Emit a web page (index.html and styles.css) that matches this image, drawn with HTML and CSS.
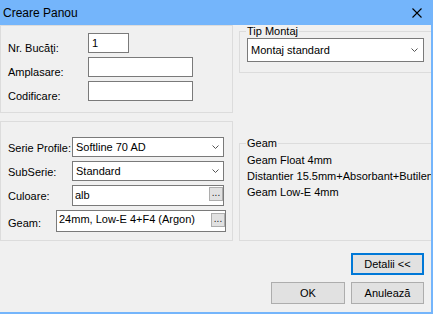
FILE: index.html
```html
<!DOCTYPE html>
<html lang="ro">
<head>
    <meta charset="UTF-8">
    <title>Creare Panou</title>
    <link rel="stylesheet" href="styles.css">
</head>
<body>
    <div class="window">
        <div class="titlebar">
            <span class="title">Creare Panou</span>
            <svg class="close" width="10" height="10" viewBox="0 0 10 10">
                <path d="M0.5 0.5 L9.5 9.5 M9.5 0.5 L0.5 9.5" stroke="#000" stroke-width="1.1" fill="none"/>
            </svg>
        </div>

        <div class="content">
            <div class="panel panel-top">
                <div class="row">
                    <span class="label label-top">Nr. Bucăţi:</span>
                    <div class="field field-small">1</div>
                </div>
                <div class="row">
                    <span class="label label-top">Amplasare:</span>
                    <div class="field field-wide"></div>
                </div>
                <div class="row">
                    <span class="label label-top">Codificare:</span>
                    <div class="field field-wide"></div>
                </div>
            </div>

            <fieldset class="group group-montaj">
                <legend>Tip Montaj</legend>
                <div class="combo combo-montaj">
                    <span>Montaj standard</span>
                    <svg width="7" height="4" viewBox="0 0 7 4"><path d="M0.5 0.5 L3.5 3.5 L6.5 0.5" stroke="#555" fill="none"/></svg>
                </div>
            </fieldset>

            <div class="panel panel-profile">
                <div class="row">
                    <span class="label label-profile">Serie Profile:</span>
                    <div class="combo">
                        <span>Softline 70 AD</span>
                        <svg width="7" height="4" viewBox="0 0 7 4"><path d="M0.5 0.5 L3.5 3.5 L6.5 0.5" stroke="#555" fill="none"/></svg>
                    </div>
                </div>
                <div class="row">
                    <span class="label label-profile">SubSerie:</span>
                    <div class="combo">
                        <span>Standard</span>
                        <svg width="7" height="4" viewBox="0 0 7 4"><path d="M0.5 0.5 L3.5 3.5 L6.5 0.5" stroke="#555" fill="none"/></svg>
                    </div>
                </div>
                <div class="row row-culoare">
                    <span class="label label-profile">Culoare:</span>
                    <div class="field field-pick">
                        <span>alb</span>
                        <span class="dots">...</span>
                    </div>
                </div>
                <div class="row row-geam">
                    <span class="label label-geam">Geam:</span>
                    <div class="field field-pick field-geam">
                        <span>24mm, Low-E 4+F4 (Argon)</span>
                        <span class="dots">...</span>
                    </div>
                </div>
            </div>

            <fieldset class="group group-geam">
                <legend>Geam</legend>
                <div class="geam-list">
                    <div>Geam Float 4mm</div>
                    <div>Distantier 15.5mm+Absorbant+Butilen</div>
                    <div>Geam Low-E 4mm</div>
                </div>
            </fieldset>
        </div>

        <div class="actions">
            <button class="btn btn-default">Detalii &lt;&lt;</button>
            <div class="actions-row">
                <button class="btn btn-ok">OK</button>
                <button class="btn">Anulează</button>
            </div>
        </div>
    </div>
</body>
</html>
```

FILE: styles.css
```css
/* Fereastra de dialog, stil Windows */
body {
    margin: 0;
    font-family: "Liberation Sans", Arial, sans-serif;
    font-size: 11px;
    color: #000;
    background: #f0f0f0;
}
.window {
    width: 433px;
    height: 314px;
    box-sizing: border-box;
    display: flex;
    flex-direction: column;
    background: #f0f0f0;
    border-right: 2px solid #74b5fb;
    border-bottom: 2px solid #74b5fb;
    overflow: hidden;
}
.titlebar {
    height: 25px;
    flex: none;
    display: flex;
    align-items: center;
    justify-content: space-between;
    padding: 0 9px 0 3px;
    background: #74b5fb;
}
.title {
    font-size: 12px;
    line-height: 14px;
    padding-top: 1px;
}
.close {
    display: block;
}

/* Zona principala */
.content {
    display: grid;
    grid-template-columns: 233px 1fr;
    grid-template-rows: 88px 120px;
    column-gap: 6px;
    row-gap: 8px;
}
.panel {
    border: 1px solid #dcdcdc;
    box-sizing: border-box;
    display: flex;
    flex-direction: column;
    gap: 4px;
    padding-left: 7px;
}
.panel-top { padding-top: 7px; }
.panel-profile { padding-top: 15px; }
.row {
    display: flex;
    height: 20px;
}
.row-culoare { height: 21px; }
.row-geam { height: 22px; }
.label {
    line-height: 13px;
    white-space: nowrap;
}
.label-top { width: 80px; margin-top: 9px; }
.label-profile { width: 64px; margin-top: 5px; }
.label-geam { width: 48px; margin-top: 7px; }

.field {
    box-sizing: border-box;
    height: 100%;
    border: 1px solid #7a7a7a;
    background: #fff;
    padding: 3px 0 0 3px;
    line-height: 13px;
}
.field-small { width: 41px; }
.field-wide { width: 105px; }
.field-pick {
    width: 152px;
    display: flex;
    justify-content: space-between;
    align-items: flex-start;
    padding: 0 0 0 2px;
}
.field-pick > span:first-child { padding-top: 3px; }
.field-geam { width: 170px; }
.field-geam > span:first-child { padding-top: 2px; }
.field-geam .dots { margin-top: 2px; }
.dots {
    box-sizing: border-box;
    width: 14px;
    height: 14px;
    margin-top: 1px;
    border: 1px solid #adadad;
    background: #e1e1e1;
    font-size: 10px;
    line-height: 10px;
    text-align: center;
    color: #222;
}

.combo {
    box-sizing: border-box;
    width: 152px;
    height: 100%;
    border: 1px solid #7a7a7a;
    background: #fff;
    display: flex;
    align-items: center;
    justify-content: space-between;
    padding: 1px 4px 0 3px;
    line-height: 13px;
}
.combo svg { display: block; margin-top: -1px; }

/* Grupuri cu titlu; marginea dreapta iese din fereastra */
.group {
    margin: 0 -6px 0 0;
    min-width: 0;
    border: 1px solid #dcdcdc;
    padding: 0 6px 10px 7px;
}
.group legend {
    padding: 0 1px;
    margin-left: -1px;
    line-height: 13px;
}
.group-montaj { align-self: start; }
.combo-montaj {
    width: 177px;
    height: 24px;
    padding-right: 5px;
}
.group-geam {
    margin-top: 16px;
    padding-bottom: 0;
}
.geam-list {
    padding-top: 2px;
    line-height: 16px;
    white-space: nowrap;
}

/* Butoane jos */
.actions {
    display: flex;
    flex-direction: column;
    align-items: flex-end;
    gap: 7px;
    padding: 12px 7px 0 0;
}
.actions-row {
    display: flex;
    gap: 6px;
}
.btn {
    box-sizing: border-box;
    width: 73px;
    height: 22px;
    margin: 0;
    padding: 0;
    font-family: inherit;
    font-size: 11px;
    color: #000;
    background: #e1e1e1;
    border: 1px solid #adadad;
}
.btn-ok { width: 74px; }
.btn-default {
    border: 2px solid #0078d7;
}
```
